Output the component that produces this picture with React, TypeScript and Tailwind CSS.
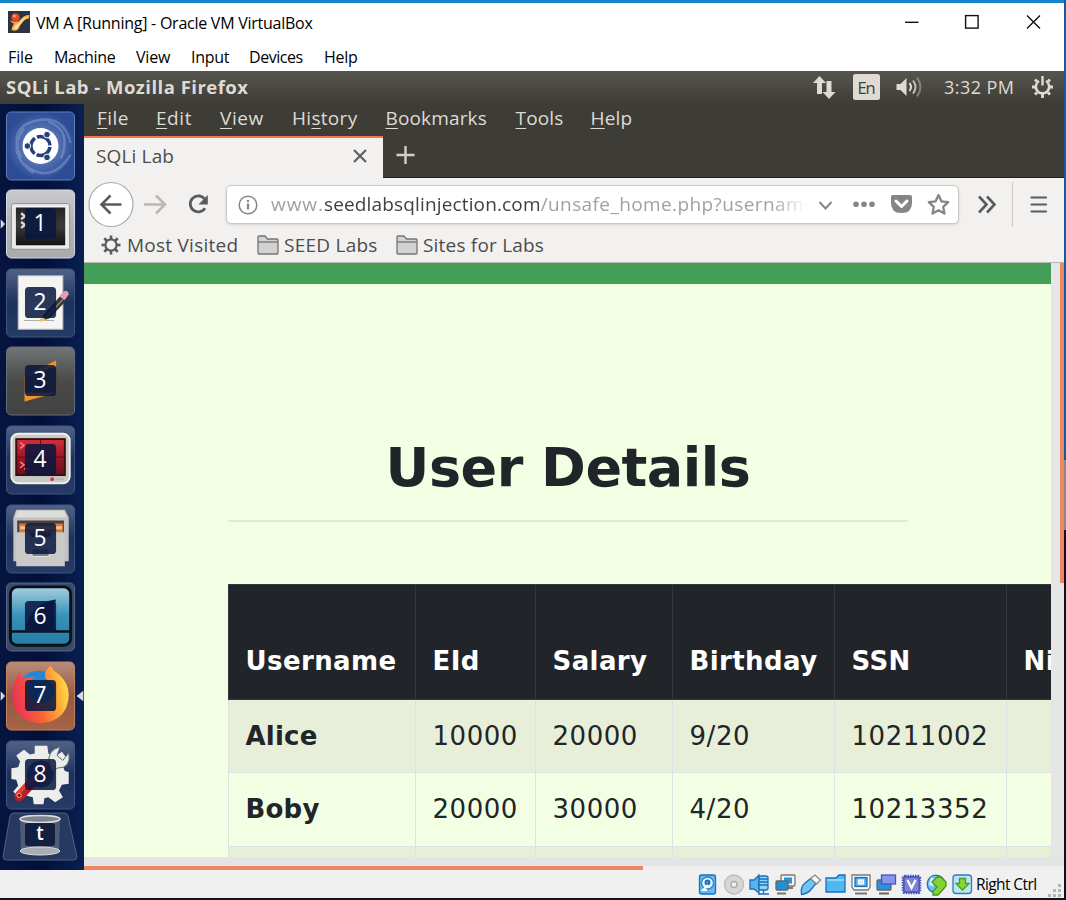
import React from 'react';

const ubuntu = "font-['Open_Sans','Noto_Sans',sans-serif]";
const segoe = "font-['Open_Sans','Noto_Sans',sans-serif]";

function Label({ w, children, className = '' }: { w: string; children: React.ReactNode; className?: string }) {
  return <span className={`block shrink-0 whitespace-nowrap ${w} ${className}`}>{children}</span>;
}

function VBoxLogo() {
  return (
    <svg className="ml-2 size-[22px] shrink-0" viewBox="0 0 22 22">
      <rect width="22" height="22" fill="#2c3440" />
      <path d="M3.500 19q1-5 3-6.500 1.500-1.200 4-2L14 7q2.500-3 7.500-3l-.5 3.500q-3.500.5-5 2L12.500 14 10 18.500Q8 20.500 3.500 19z" fill="#f8b552" />
      <path d="M5.500 18q2-4 5-5.500L15 8q2-2 5.500-2.500-3 1.500-5 4L11.500 14 9 17.500z" fill="#ffe0a0" />
      <path d="M2 9q4 3 8 1l-2 3q-4 0-6-4z" fill="#f3a65a" />
      <circle cx="7.500" cy="6.500" r="4.200" fill="#e3492b" />
      <circle cx="6.300" cy="5.100" r="1.500" fill="#ff9a7c" />
    </svg>
  );
}

function TitleBar() {
  return (
    <div className="flex h-[38px] items-center bg-white">
      <VBoxLogo />
      <span className={`ml-[6px] flex-1 whitespace-nowrap pt-px text-[16px] tracking-[-0.250px] text-black ${segoe}`}>
        VM A [Running] - Oracle VM VirtualBox
      </span>
      <svg className="h-[20px] w-[165px] shrink-0" viewBox="0 0 165 20" fill="none" stroke="#111" strokeWidth="1.4">
        <path d="M6 10.3h13.500" />
        <rect x="66.600" y="3.600" width="12.500" height="12.500" />
        <path d="M128 3.500l13 13M141 3.500l-13 13" />
      </svg>
    </div>
  );
}

function MachineMenu() {
  return (
    <div className={`flex h-[30px] items-center bg-white pt-[2px] pl-2 text-[16px] text-black ${segoe}`}>
      <Label w="w-[46px]" className="tracking-[-0.1px]">File</Label>
      <Label w="w-[82px]" className="tracking-[-0.3px]">Machine</Label>
      <Label w="w-[55px]" className="tracking-[-0.2px]">View</Label>
      <Label w="w-[58px]" className="tracking-[-0.3px]">Input</Label>
      <Label w="w-[75px]" className="tracking-[-0.450px]">Devices</Label>
      <Label w="w-[60px]" className="tracking-[-0.3px]">Help</Label>
    </div>
  );
}

function TopPanel() {
  return (
    <div className={`flex h-[33px] shrink-0 items-center bg-linear-to-b from-[#56554d] to-[#3d3c37] pb-[2px] pl-[6px] text-[#dfdbd2] ${ubuntu}`}>
      <span className="flex-1 whitespace-nowrap text-[18.500px] font-bold tracking-[0.480px]">SQLi Lab - Mozilla Firefox</span>
      <svg className="h-[30px] w-[251px] shrink-0" viewBox="813 72 251 30">
        <g fill="#dfdbd2">
          <path d="M819.500 76l6.500 7h-4v11h-5v-11h-4z" />
          <path d="M829 99l-6.500-7h4v-11h5v11h4z" />
          <rect x="853" y="74" width="27" height="26" rx="2.500" />
          <path d="M896.500 84h4l6-6v18l-6-6h-4z" />
        </g>
        <text x="866.500" y="93.500" textAnchor="middle" fontSize="16.500" fontWeight="500" fill="#3d3c37" fontFamily="Open Sans" textLength="18">En</text>
        <g fill="none" stroke="#dfdbd2" strokeWidth="2">
          <path d="M909.500 83q3 4 0 8" />
          <path d="M913 80.500q5 6.500 0 13" opacity=".8" />
          <path d="M917 77.500q7 9.500 0 19" opacity=".4" />
        </g>
        <text x="944" y="93.500" fontSize="18" fill="#dfdbd2" fontFamily="Open Sans" textLength="70">3:32 PM</text>
        <g fill="none" stroke="#dfdbd2">
          <path d="M1039 81a6.700 6.700 0 1 0 7 0" strokeWidth="2.600" />
          <path d="M1042.500 76v9.500" strokeWidth="2.400" />
          <path d="M1035 79.500l2 2M1050 79.500l-2 2M1032 87h3.500M1049.500 87h3.500M1035 94.500l2-2M1050 94.500l-2-2M1042.500 94v4" strokeWidth="2.800" />
        </g>
      </svg>
    </div>
  );
}

function Backing({ kind }: { kind: number }) {
  if (kind === 1) {
    return (
      <>
        <rect width="70" height="70" rx="5" fill="url(#silver)" stroke="#d9dce2" />
        <rect x="5" y="14" width="60" height="47" rx="2" fill="#e9e9e8" stroke="#8d8e90" />
        <rect x="9" y="17.500" width="52" height="40" fill="url(#screen)" stroke="#fff" />
        <path d="M15 24l4 3-4 3M15 33l4 3-4 3" stroke="#ddd" strokeWidth="2.400" fill="none" />
      </>
    );
  }
  if (kind === 2) {
    return (
      <>
        <rect width="70" height="70" rx="5" fill="url(#navy)" stroke="#40567f" />
        <rect x="12" y="7" width="46" height="55" fill="#f5f5f3" stroke="#bcbcbc" />
        <path d="M18 53h31" stroke="#aaa" />
        <path d="M34 54l4-7L57 26l6 5-19 20z" fill="#343536" />
        <path d="M41 50L60 29" stroke="#83817c" strokeWidth="1.500" />
        <path d="M54 28l5-5q4-2 5 3l-4 6z" fill="#e79abb" />
        <path d="M33 54l4-5 4 4z" fill="#efc060" />
      </>
    );
  }
  if (kind === 3) {
    return (
      <>
        <rect width="70" height="70" rx="5" fill="url(#charcoal)" stroke="#67707b" />
        <path d="M18.500 56V30L51 14v33z" fill="#f0942f" />
        <path d="M18.500 30l0 17 33 0 0-27z" fill="#54443b" />
      </>
    );
  }
  if (kind === 4) {
    return (
      <>
        <rect width="70" height="70" rx="5" fill="url(#navy)" stroke="#40567f" />
        <rect x="5" y="8" width="60" height="51" rx="7" fill="#c9c9c5" stroke="#efefec" strokeWidth="2" />
        <rect x="10" y="13.500" width="50" height="37" fill="url(#red)" stroke="#3d0b12" strokeWidth="2" />
        <path d="M35 14v36M11 32h48" stroke="#5c0e18" />
        <path d="M14 17l4 3-4 3M14 37l4 3-4 3M18 44h5" stroke="#ff827e" strokeWidth="1.500" fill="none" />
        <circle cx="47" cy="54.700" r="2" fill="#e53333" />
        <path d="M51 54.700h8" stroke="#999" strokeDasharray="1.500 1" />
      </>
    );
  }
  if (kind === 5) {
    return (
      <>
        <rect width="70" height="70" rx="5" fill="url(#navy)" stroke="#40567f" />
        <path d="M10 5h50l4 8v45H7V13z" fill="#c2c2c1" />
        <path d="M11 6h48l3 7H9z" fill="#dddddb" />
        <path d="M11 16h48v18H11z" fill="#4b3f3b" />
        <path d="M13 19h45v10H13z" fill="#d97838" />
        <path d="M14 22h43v3H14z" fill="#f6c48f" />
        <path d="M10 28h13l3 5h18l3-5h13v35H10z" fill="#c9c9c8" />
        <rect x="26" y="45" width="18" height="8" rx="2" fill="#777d86" stroke="#e5e5e5" />
      </>
    );
  }
  if (kind === 6) {
    return (
      <>
        <rect width="70" height="70" rx="5" fill="#3a4b68" stroke="#596985" />
        <rect x="4" y="4" width="62" height="60" rx="7" fill="url(#shark)" stroke="#06111d" strokeWidth="3" />
        <path d="M4 50h62" stroke="#06111d" strokeWidth="2.500" />
        <path d="M19 49q6-29 32-32-5 14 0 32z" fill="#0e2246" />
      </>
    );
  }
  if (kind === 7) {
    return (
      <>
        <rect width="70" height="70" rx="5" fill="url(#brown)" stroke="#c9865e" />
        <circle cx="33" cy="31" r="22" fill="#2687d5" />
        <path d="M14 10q0 5 3 7 5-1 13-2-10 5-8 16 5 14 22 10 8-6 4-18l-8-6q-2-7 5-13 4 6 9 9 10 9 10 21-1 27-29 29Q7 61 6 35q0-15 8-25z" fill="url(#fox)" />
      </>
    );
  }
  return (
    <>
      <rect width="70" height="70" rx="5" fill="url(#navy)" stroke="#40567f" />
      <path d="M29 5h13l1 8 7 3 7-5 6 8-5 7 2 5 4 1v12l-7 1-3 6 4 7-8 5-7-5-4 1-1 6H28l-1-7-7-2-7 4-6-8 5-6-2-6-5-1V28l7-1 2-6-4-6 8-6 6 5 5-1z" fill="#ededeb" />
      <circle cx="35" cy="34" r="14" fill="#455574" />
      <path d="M13 57L40 28" stroke="#b92023" strokeWidth="10" strokeLinecap="round" />
      <path d="M11 55L30 35" stroke="#dc4038" strokeWidth="4" strokeLinecap="round" />
      <path d="M44 24Q41 10 55 6l-3 9 6 5 6-8q3 16-12 16l-5 4z" fill="#e8eceb" stroke="#62686c" />
      <circle cx="13" cy="56" r="2.200" fill="#7c1a1c" stroke="#f5aaa0" />
    </>
  );
}

function Defs() {
  const g: [string, [string, string, string]][] = [
    ['silver', ['#c9cacd', '#b3b4b7', '#a9aaad']],
    ['screen', ['#242424', '#3a3a3a', '#111111']],
    ['navy', ['#516286', '#1c315c', '#263b66']],
    ['charcoal', ['#717475', '#4a4a4a', '#424242']],
    ['red', ['#d82f3a', '#981728', '#68101c']],
    ['shark', ['#a5cfe0', '#3792b8', '#267da5']],
    ['brown', ['#b98c7a', '#945944', '#a66445']],
  ];
  return (
    <defs>
      {g.map(([id, c]) => (
        <linearGradient id={id} key={id} x1="0" y1="0" x2="0" y2="1">
          <stop offset="0" stopColor={c[0]} />
          <stop offset=".5" stopColor={c[1]} />
          <stop offset="1" stopColor={c[2]} />
        </linearGradient>
      ))}
      <linearGradient id="fox" x1="0" y1=".5" x2="1" y2=".3">
        <stop offset="0" stopColor="#ed3154" />
        <stop offset=".45" stopColor="#fb6536" />
        <stop offset=".8" stopColor="#ffb43a" />
        <stop offset="1" stopColor="#ffe04e" />
      </linearGradient>
      <radialGradient id="dash">
        <stop offset="0" stopColor="#7f99d0" />
        <stop offset="1" stopColor="#2c4c96" />
      </radialGradient>
    </defs>
  );
}

function Launcher() {
  return (
    <aside className="flex w-[84px] shrink-0 flex-col bg-linear-to-r from-[#06153f] via-[#021039] to-[#0a2051] pt-[6.5px]">
      <svg className="ml-[5px] h-[70px] w-[71px] shrink-0" viewBox="-1 -1 72 72">
        <Defs />
        <rect width="70" height="70" rx="5" fill="url(#dash)" stroke="#6581bc" />
        <g fill="none" stroke="#a9bce4" strokeWidth="2.500" opacity=".35">
          <path d="M15 47Q1 16 30 9t36 23" />
          <path d="M28 63Q-1 43 18 17" />
          <path d="M18 54q28 22 48-10" />
          <path d="M43 10q25 9 13 38" />
        </g>
        <circle cx="35" cy="35" r="18.500" fill="#fff" />
        <circle cx="35" cy="35" r="9.800" fill="none" stroke="#27407b" strokeWidth="3.600" strokeDasharray="18.300 2.200" strokeDashoffset="-1.100" />
        <g fill="#27407b" stroke="#fff">
          <circle cx="21.500" cy="35" r="3.400" />
          <circle cx="41.700" cy="23.300" r="3.400" />
          <circle cx="41.700" cy="46.700" r="3.400" />
        </g>
      </svg>
      {[1, 2, 3, 4, 5, 6, 7, 8].map((n) => (
        <svg key={n} className="mt-[8.650px] h-[70px] w-[84px] shrink-0" viewBox="-6 -1 85 72">
          <Backing kind={n} />
          {(n === 1 || n === 7) && <path d="M-6 30l4.500 5-4.500 5z" fill="#d6dbe4" />}
          {n === 7 && <path d="M79 29.500l-7 5.500 7 5.500z" fill="#d6dbe4" />}
          <rect x="19" y="18.500" width="32" height="32" rx="4" fill="#09173f" opacity=".86" />
          <text x="34.500" y="42.500" textAnchor="middle" fontFamily="Open Sans" fontWeight="500" fontSize="23.500" fill="#fff">{n}</text>
        </svg>
      ))}
      <svg className="mt-[2px] h-[50px] w-[84px] shrink-0" viewBox="0 0 84 50">
        <path d="M14 1h50q3 0 4 3l9 41q0 3-4 3H7q-4 0-4-3l7-41q1-3 4-3z" fill="#263960" stroke="#52617f" />
        <path d="M20 8h40l-1 29H21z" fill="#5b6578" opacity=".8" />
        <ellipse cx="40" cy="7" rx="20" ry="3.500" fill="#7c8492" stroke="#d9dddc" strokeWidth="1.500" />
        <ellipse cx="40" cy="39" rx="20" ry="4" fill="#a9adb4" stroke="#d9dddc" />
        <rect x="25" y="11" width="30" height="23" rx="3" fill="#0a1738" opacity=".88" />
        <text x="40" y="28" textAnchor="middle" fontFamily="Open Sans" fontWeight="600" fontSize="19" fill="#fff">t</text>
      </svg>
    </aside>
  );
}

function FirefoxMenu() {
  return (
    <div className={`flex h-[32px] items-center bg-[#3d3c37] pb-[3px] pl-[13px] text-[19px] font-medium text-[#dfdbd2] ${ubuntu}`}>
      <Label w="w-[59px]" className="tracking-[0.450px]"><u className="underline-offset-3">F</u>ile</Label>
      <Label w="w-[64px]" className="tracking-[0.550px]"><u className="underline-offset-3">E</u>dit</Label>
      <Label w="w-[72px]" className="tracking-[0.550px]"><u className="underline-offset-3">V</u>iew</Label>
      <Label w="w-[93.500px]" className="tracking-[0.3px]">Hi<u className="underline-offset-3">s</u>tory</Label>
      <Label w="w-[130px]" className="tracking-[0.150px]"><u className="underline-offset-3">B</u>ookmarks</Label>
      <Label w="w-[75px]" className="tracking-[0.150px]"><u className="underline-offset-3">T</u>ools</Label>
      <Label w="w-[60px]" className="tracking-[0.2px]"><u className="underline-offset-3">H</u>elp</Label>
    </div>
  );
}

function TabStrip() {
  return (
    <div className="flex h-[43px] bg-[#3d3c37]">
      <div className="flex w-[299px] items-center border-t-[2.500px] border-[#f0774a] bg-[#f2f1f0] pb-[3px] pl-3">
        <span className={`flex-1 text-[19px] font-medium tracking-[0.150px] text-[#4c4c4c] ${ubuntu}`}>SQLi Lab</span>
        <svg className="mr-4 size-[14px]" viewBox="0 0 14 14" stroke="#5f5f5f" strokeWidth="2.200">
          <path d="M1 1l12 12M13 1L1 13" />
        </svg>
      </div>
      <div className="flex flex-1 items-center border-b border-[#232220]">
        <svg className="ml-[13px] -mt-[3px] size-[20px]" viewBox="0 0 20 20" stroke="#d5d1c8" strokeWidth="2.400">
          <path d="M.5 10h18M9.500 1v18" />
        </svg>
      </div>
    </div>
  );
}

function NavBar() {
  return (
    <div className="flex h-[53px] items-center bg-[#f2f1f0]">
      <svg className="h-[53px] w-[142px] shrink-0" viewBox="84 178 142 53" fill="none" stroke="#5b5b5b" strokeWidth="2.600">
        <circle cx="111" cy="204.500" r="22" fill="#fff" stroke="#aaa9a7" strokeWidth="1.200" />
        <path d="M121.500 204.500h-19.500M110.500 195.500l-9 9 9 9" />
        <path d="M144 204.500h20M156 195.500l9 9-9 9" stroke="#b9b8b7" />
        <path d="M204.500 198.800a8 8 0 1 0 .5 9.500" strokeWidth="2.800" />
        <path d="M207.800 195v9.500h-9.300z" fill="#5b5b5b" stroke="none" />
      </svg>
      <div className={`flex h-[39px] w-[733px] shrink-0 items-center rounded-[5px] border border-[#c9c8c6] bg-white pl-[11px] text-[19px] text-[#a1a1a1] shadow-sm ${ubuntu}`}>
        <svg className="size-[20px] shrink-0" viewBox="0 0 20 20" fill="none" stroke="#858585">
          <circle cx="10" cy="10" r="8.800" strokeWidth="1.500" />
          <path d="M10 8.500v6M10 5v2" strokeWidth="2.200" />
        </svg>
        <div className="ml-[13px] w-[537px] shrink-0 overflow-hidden whitespace-nowrap mask-r-from-93% mask-r-to-100%">
          <span className="tracking-[0.950px]">www.</span>
          <span className="font-medium tracking-[0.150px] text-[#3f3f3f]">seedlabsqlinjection.com</span>
          <span className="tracking-[0.4px]">/unsafe_home.php?username=</span>
        </div>
        <svg className="h-[30px] w-[143px] shrink-0" viewBox="808 190 143 30" fill="none" stroke="#858585" strokeWidth="2">
          <path d="M819.500 202l6 6.500 6-6.500" />
          <g fill="#858585" stroke="none">
            <circle cx="856" cy="204.300" r="2.800" />
            <circle cx="864" cy="204.300" r="2.800" />
            <circle cx="872" cy="204.300" r="2.800" />
            <path d="M893 195h17q2 0 2 2v6q0 10-10.500 10T891 203v-6q0-2 2-2z" />
          </g>
          <path d="M896 201l5.500 5.500 5.500-5.500" stroke="#fff" strokeWidth="3" strokeLinecap="round" strokeLinejoin="round" />
          <path d="M938.500 195l2.900 6.300 6.800.8-5 4.700 1.300 6.800-6-3.300-6 3.300 1.300-6.800-5-4.700 6.800-.8z" strokeLinejoin="round" strokeWidth="2.300" />
        </svg>
      </div>
      <svg className="h-[53px] w-[105px] shrink-0" viewBox="959 178 105 53" fill="none" stroke="#5b5b5b" strokeWidth="2.600">
        <path d="M979 196.500l7.500 8-7.500 8M987 196.500l7.500 8-7.500 8" />
        <path d="M1012.500 182v45" stroke="#d0cfcd" strokeWidth="1.200" />
        <path d="M1031.500 197.500h14.500M1031.500 204.500h14.500M1031.500 211.500h14.500" strokeWidth="2.200" strokeLinecap="round" />
      </svg>
    </div>
  );
}

function Folder() {
  return (
    <svg className="h-[20px] w-[22px] shrink-0" viewBox="0 0 22 20" fill="#d3d2d0" stroke="#747474" strokeWidth="1.300">
      <path d="M1 18V2q0-1 1-1h6l2.500 3H20q1 0 1 1v13q0 1-1 1H2q-1 0-1-1z" />
      <path d="M1 7h20" />
    </svg>
  );
}

function Bookmarks() {
  return (
    <div className={`flex h-[32px] items-center border-b border-[#b9b8b5] bg-[#f2f1f0] pb-[3px] pl-[17px] text-[19px] font-medium text-[#4c4c4c] ${ubuntu}`}>
      <svg className="mr-[6px] size-[20px] shrink-0" viewBox="-10 -10 20 20" fill="none" stroke="#5b5b5b">
        <circle r="5.600" strokeWidth="2.200" />
        {[0, 45, 90, 135, 180, 225, 270, 315].map((a) => (
          <path key={a} d="M0-6v-3.500" strokeWidth="2.600" transform={`rotate(${a})`} />
        ))}
      </svg>
      <Label w="w-[130px]" className="tracking-[0.250px]">Most Visited</Label>
      <Folder />
      <Label w="w-[112px]" className="ml-[5px] tracking-[0.250px]">SEED Labs</Label>
      <Folder />
      <Label w="w-[140px]" className="ml-[5px] tracking-[0.2px]">Sites for Labs</Label>
    </div>
  );
}

const rows = [
  ['Alice', '10000', '20000', '9/20', '10211002', ''],
  ['Boby', '20000', '30000', '4/20', '10213352', ''],
  ['', '', '', '', '', ''],
];

function Page() {
  return (
    <div className="h-[594px] w-[967px] overflow-hidden bg-[#f3ffe3] font-['DejaVu_Sans',sans-serif] text-[#212529]">
      <div className="h-[21px] bg-[#439e57]" />
      <div className="ml-[144px] w-[680px] border-b-2 border-[#e0e9d2] pt-[149px] pb-[17px] text-center text-[54px] leading-[70px] font-bold tracking-[-0.5px] whitespace-nowrap">
        User Details
      </div>
      <table className="mt-[62px] ml-[144px] w-[1000px] table-fixed border-collapse text-left text-[26px] tracking-[0.550px]">
        <colgroup>
          <col className="w-[187px]" />
          <col className="w-[120px]" />
          <col className="w-[137px]" />
          <col className="w-[162px]" />
          <col className="w-[172px]" />
          <col className="w-[222px]" />
        </colgroup>
        <thead>
          <tr className="h-[115px] bg-[#212529] text-white">
            {['Username', 'EId', 'Salary', 'Birthday', 'SSN', 'Nickname'].map((h) => (
              <th key={h} className="border border-[#32383e] pb-[19px] pl-[16.500px] align-bottom leading-[38px] font-bold tracking-[0.4px]">{h}</th>
            ))}
          </tr>
        </thead>
        <tbody>
          {rows.map((r, i) => (
            <tr key={i} className={i % 2 === 0 ? 'h-[73px] bg-[#e7efd8]' : 'h-[74px]'}>
              {r.map((c, j) => (
                <td key={j} className={`border border-[#dee2e6] pl-[16.500px] ${j === 0 ? 'font-bold tracking-[0.2px]' : ''}`}>{c}</td>
              ))}
            </tr>
          ))}
        </tbody>
      </table>
    </div>
  );
}

function Browser() {
  return (
    <div className="flex w-[980px] flex-col">
      <FirefoxMenu />
      <TabStrip />
      <NavBar />
      <Bookmarks />
      <div className="flex h-[594px]">
        <Page />
        <div className="flex w-[13px] justify-end bg-[#e6e6e6]">
          <div className="h-[320px] w-[4px] bg-[#ed8761]" />
        </div>
      </div>
      <div className="flex h-[13px] items-end bg-[#e4e4e4]">
        <div className="h-[4px] w-[559px] bg-[#ed8761]" />
        <div className="h-[4px] flex-1 bg-[#efefef]" />
      </div>
    </div>
  );
}

function StatusBar() {
  return (
    <div className="flex h-[28px] items-center justify-end bg-[#f0f0f0]">
      <svg className="h-[26px] w-[279px] shrink-0" viewBox="697 871 279 26" fill="none" stroke="#1e6fb8" strokeWidth="1.300">
        <rect x="699.500" y="875" width="16" height="19" rx="2" fill="#62baf3" />
        <circle cx="707.500" cy="883" r="6" fill="#e6f6ff" stroke="#2b86cf" />
        <circle cx="707.500" cy="882.500" r="2.300" fill="#3989c5" />
        <path d="M708 885l-5 5h4" stroke="#fff" strokeWidth="2" />
        <circle cx="734" cy="884.500" r="9.500" fill="#d6d6d6" stroke="#bdbdbd" />
        <circle cx="734" cy="884.500" r="3" fill="#eee" stroke="#aaa" />
        <path d="M750 880h4l5-5v18l-5-4h-4z" fill="#55b6ef" />
        <rect x="759" y="876" width="9" height="14" rx="2" fill="#8fd3f8" />
        <path d="M759 879h9M759 882h9M759 885h9M763.500 890v4M758 894h11" />
        <rect x="781" y="875" width="14" height="11" rx="1" fill="#f4f4f4" stroke="#777" />
        <rect x="784" y="877.500" width="8" height="6" fill="#2196dc" stroke="none" />
        <path d="M786 888h7" stroke="#777" strokeWidth="2" />
        <rect x="776" y="881" width="12" height="9" rx="1" fill="#1f91da" stroke="#666" />
        <path d="M777 893.500h9" stroke="#777" strokeWidth="2" />
        <path d="M801.500 894.500q-1-8 3-11l6-5 5.500 5-5 6q-3 4-9.500 5z" fill="#70c4f6" />
        <path d="M810.500 878.500l4.500-3.500 5.500 5-4 4z" fill="#f5f5f5" stroke="#888" />
        <path d="M826 878h10l3-3h6v17h-19z" fill="#4fb8f2" />
        <path d="M827 880h17" stroke="#b5e5fd" />
        <path d="M852 875h18v12l-2 3h-14l-2-3z" fill="#fff" stroke="#777" />
        <rect x="855" y="877.500" width="12" height="9" fill="#4cb0ee" />
        <rect x="858.500" y="880" width="5" height="4" fill="#c9ebff" stroke="#fff" />
        <path d="M855 893.500h12" stroke="#777" strokeWidth="2" />
        <rect x="877" y="880" width="14" height="10" rx="1" fill="#2b93dc" stroke="#666" />
        <rect x="881.500" y="875" width="14" height="9" fill="#8796ec" stroke="#4653c4" />
        <path d="M879 893.500h10" stroke="#666" strokeWidth="2" />
        <rect x="903" y="876" width="17" height="17" rx="2" fill="#8a90de" stroke="#4b51b5" strokeWidth="2.500" strokeDasharray="1.500 1" />
        <rect x="904" y="877" width="15" height="15" rx="1" fill="#7d84d8" stroke="#4b51b5" />
        <path d="M907.500 880l4 8 4-8" stroke="#fff" strokeWidth="2.200" />
        <circle cx="936" cy="884" r="8.800" fill="#71c5ee" />
        <path d="M931 877l5 3-3 6-4-1z" fill="#d6f1fc" stroke="none" />
        <path d="M937 877h4l5 5v4l-8 9h-5v-4l4-4-5-5z" fill="#84d430" stroke="#4a8f2e" />
        <rect x="953" y="875" width="18.500" height="18.500" rx="3" fill="#b6e4fa" stroke="#367bad" />
        <path d="M959.500 878.500h6v5h3.500l-6.500 6.500-6.500-6.500h3.500z" fill="#8ad63a" stroke="#4a9a24" />
      </svg>
      <span className={`w-[71px] shrink-0 pt-[2px] text-[15.500px] tracking-[-0.6px] whitespace-nowrap text-black ${segoe}`}>Right Ctrl</span>
      <svg className="h-[28px] w-[17px] shrink-0" viewBox="0 0 17 28" fill="#b5b5b5">
        <path d="M11 14h3v3h-3zM6 19h3v3H6zM11 19h3v3h-3zM1 24h3v3H1zM6 24h3v3H6zM11 24h3v3h-3z" />
      </svg>
    </div>
  );
}

export default function App() {
  return (
    <div className="flex h-[900px] w-[1066px] overflow-hidden bg-[#17101c]">
      <div className="flex w-[1064px] flex-col border-t-[3px] border-[#1683cf]">
        <TitleBar />
        <MachineMenu />
        <TopPanel />
        <div className="flex h-[766px]">
          <Launcher />
          <Browser />
        </div>
        <StatusBar />
      </div>
      <div className="flex w-[2px] flex-col">
        <div className="h-[460px] bg-[#155a96]" />
        <div className="h-[70px] bg-[#8a8a8a]" />
      </div>
    </div>
  );
}
